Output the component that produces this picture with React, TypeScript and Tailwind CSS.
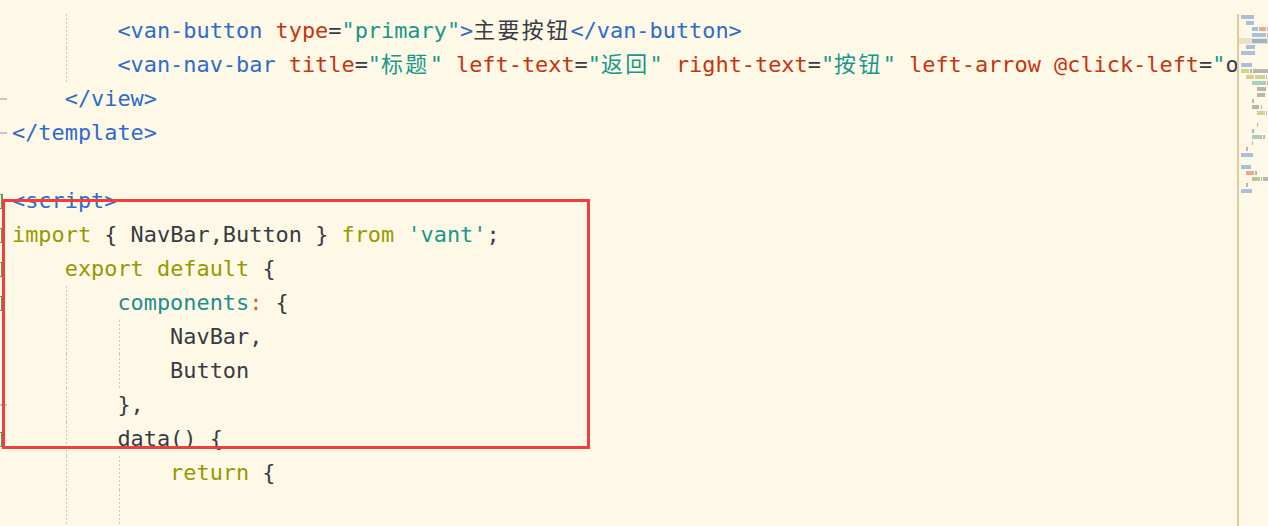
import React from "react";

type Tok = [string, string];

const C = {
  tag: "text-[#2f6bcc]",
  attr: "text-[#c8330f]",
  str: "text-[#18978b]",
  txt: "text-[#383b44]",
  kw: "text-[#989800]",
  prop: "text-[#1b8f8f]",
  colon: "text-[#e0601c]",
};

function Cjk({ children }: { children: React.ReactNode }) {
  return <span className="tracking-[2.4px]">{children}</span>;
}

type Line = {
  marker?: "dash" | "bracket";
  guides: boolean[];
  toks: (Tok | ["cjk", string, string])[];
};

const lines: Line[] = [
  {
    guides: [false, true],
    toks: [
      [C.tag, "<van-button "],
      [C.attr, "type"],
      [C.txt, "="],
      [C.str, '"primary"'],
      [C.tag, ">"],
      ["cjk", C.txt, "主要按钮"],
      [C.tag, "</van-button>"],
    ],
  },
  {
    guides: [false, true],
    toks: [
      [C.tag, "<van-nav-bar "],
      [C.attr, "title"],
      [C.txt, "="],
      [C.str, '"'],
      ["cjk", C.str, "标题"],
      [C.str, '" '],
      [C.attr, "left-text"],
      [C.txt, "="],
      [C.str, '"'],
      ["cjk", C.str, "返回"],
      [C.str, '" '],
      [C.attr, "right-text"],
      [C.txt, "="],
      [C.str, '"'],
      ["cjk", C.str, "按钮"],
      [C.str, '" '],
      [C.attr, "left-arrow @click-left"],
      [C.txt, "="],
      [C.str, '"'],
      [C.txt, "o"],
    ],
  },
  { marker: "dash", guides: [false], toks: [[C.tag, "</view>"]] },
  { marker: "dash", guides: [], toks: [[C.tag, "</template>"]] },
  { guides: [], toks: [] },
  { marker: "bracket", guides: [], toks: [[C.tag, "<script>"]] },
  {
    marker: "bracket",
    guides: [],
    toks: [
      [C.kw, "import"],
      [C.txt, " { NavBar,Button } "],
      [C.kw, "from"],
      [C.txt, " "],
      [C.str, "'vant'"],
      [C.txt, ";"],
    ],
  },
  {
    marker: "bracket",
    guides: [false],
    toks: [
      [C.kw, "export default"],
      [C.txt, " {"],
    ],
  },
  {
    marker: "bracket",
    guides: [false, true],
    toks: [
      [C.prop, "components"],
      [C.colon, ":"],
      [C.txt, " {"],
    ],
  },
  { guides: [false, true, true], toks: [[C.txt, "NavBar,"]] },
  { guides: [false, true, true], toks: [[C.txt, "Button"]] },
  { marker: "dash", guides: [false, true], toks: [[C.txt, "},"]] },
  { marker: "bracket", guides: [false, true], toks: [[C.txt, "data() {"]] },
  {
    guides: [false, true, true],
    toks: [
      [C.kw, "return"],
      [C.txt, " {"],
    ],
  },
  { guides: [false, true, true], toks: [] },
];

const blue = "#a8bfdd";
const orange = "#eba98e";
const teal = "#a6d0c2";
const olive = "#d2d28a";
const gray = "#b7b7b2";
const green = "#b3cc95";

const bars: [number, number, number, string][] = [
  [15, 1241, 13, blue],
  [21, 1246, 8, blue],
  [27, 1252, 6, blue],
  [27, 1259, 7, orange],
  [27, 1267, 1, teal],
  [33, 1252, 14, blue],
  [33, 1267, 1, orange],
  [39, 1252, 15, "#9fb2c6"],
  [45, 1246, 9, blue],
  [51, 1241, 14, blue],
  [63, 1241, 11, blue],
  [69, 1241, 8, olive],
  [69, 1250, 2, gray],
  [69, 1253, 15, gray],
  [75, 1246, 8, olive],
  [75, 1255, 10, olive],
  [75, 1266, 1, gray],
  [81, 1252, 13, teal],
  [81, 1265, 1, orange],
  [81, 1267, 1, gray],
  [87, 1257, 9, gray],
  [93, 1257, 8, gray],
  [99, 1252, 2, gray],
  [105, 1252, 7, gray],
  [105, 1261, 1, gray],
  [111, 1257, 8, olive],
  [111, 1266, 1, gray],
  [123, 1257, 1, gray],
  [129, 1252, 2, gray],
  [135, 1252, 9, teal],
  [135, 1261, 1, orange],
  [135, 1263, 2, gray],
  [141, 1252, 1, gray],
  [147, 1246, 2, gray],
  [153, 1241, 12, blue],
  [165, 1241, 10, blue],
  [171, 1246, 8, orange],
  [171, 1255, 2, gray],
  [177, 1252, 8, green],
  [177, 1261, 1, gray],
  [177, 1263, 5, gray],
  [183, 1246, 2, gray],
  [189, 1241, 11, blue],
];

function Minimap() {
  return (
    <div className="mt-[14px] w-[31px] shrink-0 border-l-2 border-[#dccb9f]">
      <svg width="29" height="512" viewBox="0 0 29 512">
        <rect x="0" y="24" width="29" height="6" fill="#ebe1c6" />
        {bars.map(([y, x, w, c], i) => (
          <rect key={i} x={x - 1239} y={y - 14} width={w} height={4} fill={c} />
        ))}
      </svg>
    </div>
  );
}

export default function App() {
  return (
    <div className="relative flex h-[526px] w-[1268px] overflow-hidden bg-[#fef9e7]">
      <div className="min-w-0 flex-1 overflow-hidden pt-[14px] font-['DejaVu_Sans_Mono','Noto_Sans_CJK_SC',monospace] text-[21.9px]">
        {lines.map((ln, i) => (
          <div key={i} className="flex h-[34px]">
            <div className="flex w-[12px] shrink-0 items-center">
              {ln.marker === "dash" && <div className="h-[2px] w-[7px] bg-[#c6c6c2]" />}
              {ln.marker === "bracket" && (
                <div className="h-[15px] w-[3px] border-y border-r-2 border-[#55a055]" />
              )}
            </div>
            {ln.guides.map((g, j) => (
              <div key={j} className="w-[4ch] shrink-0">
                {g && (
                  <div className="ml-[1.5px] h-full w-px bg-[repeating-linear-gradient(to_bottom,#c9c9c4_0px,#c9c9c4_2px,transparent_2px,transparent_4px)]" />
                )}
              </div>
            ))}
            <div className="flex items-center whitespace-pre">
              {ln.toks.map((t, k) =>
                t[0] === "cjk" ? (
                  <span key={k} className={t[1]}>
                    <Cjk>{t[2]}</Cjk>
                  </span>
                ) : (
                  <span key={k} className={t[0]}>
                    {t[1]}
                  </span>
                )
              )}
            </div>
          </div>
        ))}
      </div>
      <Minimap />
      <div className="absolute left-[2px] top-[199px] h-[250px] w-[588px] border-[3px] border-[#f23d3d]" />
    </div>
  );
}
